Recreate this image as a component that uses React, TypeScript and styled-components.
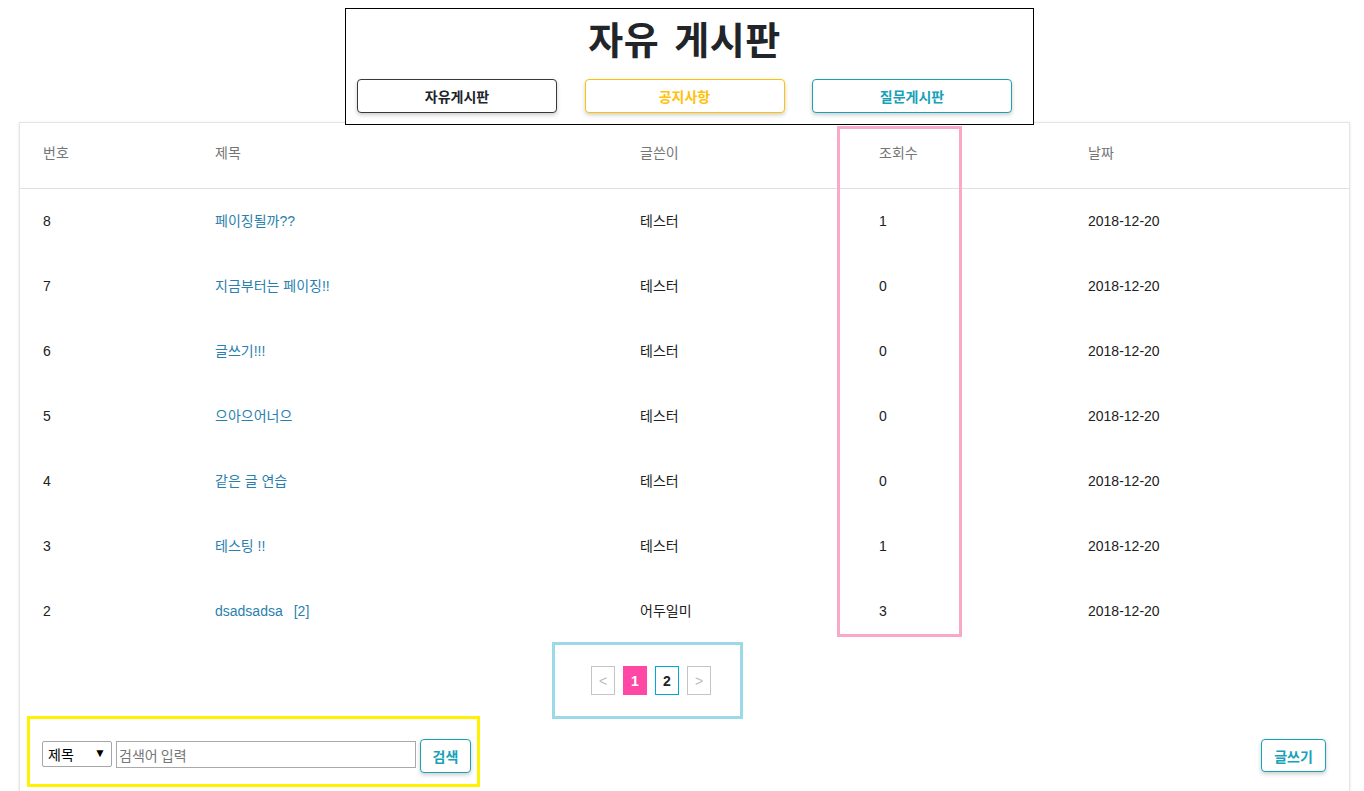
import React from "react";
import styled, { createGlobalStyle } from "styled-components";

const GlobalStyle = createGlobalStyle`
  * { box-sizing: border-box; }
  html, body { padding: 0; background: #fff; }
  body {
    margin: 8px;
    font-family: "Liberation Sans", "Noto Sans CJK KR", sans-serif;
    font-size: 14px;
    color: #212121;
  }
`;

const BoardHeader = styled.header`
  position: relative;
  z-index: 1;
  width: 689px;
  height: 117px;
  margin-left: 337px;
  padding: 6px 21px 0 11px;
  border: 1px solid #000;
  background: #fff;
`;

const Title = styled.h1`
  margin: 0;
  font-family: "Noto Sans CJK KR", sans-serif;
  font-size: 38px;
  font-weight: 700;
  line-height: 46px;
  letter-spacing: 0.5px;
  word-spacing: 6px;
  text-align: center;
  color: #212529;
`;

const BoardNav = styled.nav`
  display: flex;
  justify-content: space-between;
  margin-top: 18px;
`;

const NavButton = styled.button<{ $color: string; $text: string }>`
  width: 200px;
  height: 34px;
  padding: 0;
  border: 1px solid ${(p) => p.$color};
  border-radius: 4px;
  background: #fff;
  color: ${(p) => p.$text};
  font-family: "Noto Sans CJK KR", sans-serif;
  font-size: 14px;
  font-weight: 700;
  box-shadow: 0 2px 4px rgba(0, 0, 0, 0.2);
  cursor: pointer;
`;

const Card = styled.main`
  position: relative;
  width: 1331px;
  margin: -3px 0 0 11px;
  padding-bottom: 24px;
  border: 1px solid #e4e4e4;
  background: #fff;
  box-shadow: 0 1px 3px rgba(0, 0, 0, 0.1);
`;

const Row = styled.div<{ $head?: boolean }>`
  display: grid;
  grid-template-columns: 172px 425px 239px 209px 1fr;
  align-items: center;
  height: ${(p) => (p.$head ? "66px" : "65px")};
  padding: ${(p) => (p.$head ? "0 0 5px 23px" : "0 0 2px 23px")};
  border-bottom: ${(p) => (p.$head ? "1px solid #e0e0e0" : "none")};
  color: ${(p) => (p.$head ? "#757575" : "#212121")};
  font-size: 14px;
  line-height: 20px;
`;

const Cell = styled.div`
  white-space: nowrap;
`;

const TitleLink = styled.a`
  color: #2a7fae;
  text-decoration: none;
`;

const Reply = styled.span`
  margin-left: 11px;
`;

const ColumnHighlight = styled.div`
  position: absolute;
  left: 817px;
  top: 3px;
  width: 125px;
  height: 511px;
  border: 3px solid #f9a8c8;
  pointer-events: none;
`;

const Pagination = styled.nav`
  display: flex;
  gap: 8px;
  width: 185px;
  height: 71px;
  margin: 1px 0 0 535px;
  padding: 21px 0 0 36px;
  outline: 3px solid #9bd8e8;
`;

const PageButton = styled.button<{ $variant: "arrow" | "active" | "page" }>`
  width: 24px;
  height: 29px;
  padding: 0;
  font-family: "Liberation Sans", sans-serif;
  font-size: 14px;
  font-weight: ${(p) => (p.$variant === "arrow" ? 400 : 700)};
  background: ${(p) => (p.$variant === "active" ? "#ff48a5" : "#fff")};
  color: ${(p) =>
    p.$variant === "active" ? "#fff" : p.$variant === "page" ? "#222" : "#bdbdbd"};
  border: 1px solid
    ${(p) =>
      p.$variant === "active" ? "#ff48a5" : p.$variant === "page" ? "#00aad6" : "#c4c4c4"};
  cursor: pointer;
`;

const BottomBar = styled.div`
  display: flex;
  justify-content: space-between;
  align-items: flex-start;
  margin-top: 3px;
`;

const SearchForm = styled.form`
  display: flex;
  align-items: flex-start;
  gap: 4px;
  width: 447px;
  height: 65px;
  margin-left: 10px;
  padding: 20px 0 0 12px;
  outline: 3px solid #fff200;
`;

const SelectWrap = styled.div`
  position: relative;
  width: 70px;
  height: 26px;
  margin-top: 2px;
`;

const Select = styled.select`
  width: 100%;
  height: 100%;
  padding: 0 0 0 5px;
  appearance: none;
  border: 1px solid #a6a6a6;
  border-radius: 2px;
  background: #fff;
  color: #000;
  font-family: "Noto Sans CJK KR", sans-serif;
  font-size: 14px;
`;

const SelectArrow = styled.span`
  position: absolute;
  right: 6px;
  top: 6px;
  font-size: 12px;
  line-height: 12px;
  color: #000;
  pointer-events: none;
`;

const SearchInput = styled.input`
  width: 300px;
  height: 27px;
  margin-top: 2px;
  padding: 0 2px;
  border: 1px solid #a9a9a9;
  font-family: "Noto Sans CJK KR", sans-serif;
  font-size: 14px;
  color: #212121;
  &::placeholder {
    color: #757575;
  }
`;

const ActionButton = styled.button<{ $w: number; $h: number }>`
  width: ${(p) => p.$w}px;
  height: ${(p) => p.$h}px;
  padding: 0;
  border: 1px solid #17a2b8;
  border-radius: 4px;
  background: #fff;
  color: #17a2b8;
  font-family: "Noto Sans CJK KR", sans-serif;
  font-size: 14px;
  font-weight: 700;
  box-shadow: 0 2px 4px rgba(0, 0, 0, 0.2);
  cursor: pointer;
`;

const WriteButton = styled(ActionButton)`
  margin: 20px 23px 0 0;
`;

type Post = { no: number; title: string; reply?: number; author: string; views: number; date: string };

const posts: Post[] = [
  { no: 8, title: "페이징될까??", author: "테스터", views: 1, date: "2018-12-20" },
  { no: 7, title: "지금부터는 페이징!!", author: "테스터", views: 0, date: "2018-12-20" },
  { no: 6, title: "글쓰기!!!", author: "테스터", views: 0, date: "2018-12-20" },
  { no: 5, title: "으아으어너으", author: "테스터", views: 0, date: "2018-12-20" },
  { no: 4, title: "같은 글 연습", author: "테스터", views: 0, date: "2018-12-20" },
  { no: 3, title: "테스팅 !!", author: "테스터", views: 1, date: "2018-12-20" },
  { no: 2, title: "dsadsadsa", reply: 2, author: "어두일미", views: 3, date: "2018-12-20" },
];

export default function App() {
  return (
    <>
      <GlobalStyle />
      <BoardHeader>
        <Title>자유 게시판</Title>
        <BoardNav>
          <NavButton $color="#343a40" $text="#212529">자유게시판</NavButton>
          <NavButton $color="#ffc107" $text="#ffc107">공지사항</NavButton>
          <NavButton $color="#17a2b8" $text="#17a2b8">질문게시판</NavButton>
        </BoardNav>
      </BoardHeader>
      <Card>
        <Row $head>
          <Cell>번호</Cell>
          <Cell>제목</Cell>
          <Cell>글쓴이</Cell>
          <Cell>조회수</Cell>
          <Cell>날짜</Cell>
        </Row>
        {posts.map((p) => (
          <Row key={p.no}>
            <Cell>{p.no}</Cell>
            <Cell>
              <TitleLink href="#">
                {p.title}
                {p.reply !== undefined && <Reply>[{p.reply}]</Reply>}
              </TitleLink>
            </Cell>
            <Cell>{p.author}</Cell>
            <Cell>{p.views}</Cell>
            <Cell>{p.date}</Cell>
          </Row>
        ))}
        <ColumnHighlight />
        <Pagination>
          <PageButton $variant="arrow">&lt;</PageButton>
          <PageButton $variant="active">1</PageButton>
          <PageButton $variant="page">2</PageButton>
          <PageButton $variant="arrow">&gt;</PageButton>
        </Pagination>
        <BottomBar>
          <SearchForm onSubmit={(e) => e.preventDefault()}>
            <SelectWrap>
              <Select defaultValue="title">
                <option value="title">제목</option>
                <option value="content">내용</option>
                <option value="author">글쓴이</option>
              </Select>
              <SelectArrow>▼</SelectArrow>
            </SelectWrap>
            <SearchInput placeholder="검색어 입력" />
            <ActionButton $w={51} $h={34}>검색</ActionButton>
          </SearchForm>
          <WriteButton $w={65} $h={33}>글쓰기</WriteButton>
        </BottomBar>
      </Card>
    </>
  );
}
